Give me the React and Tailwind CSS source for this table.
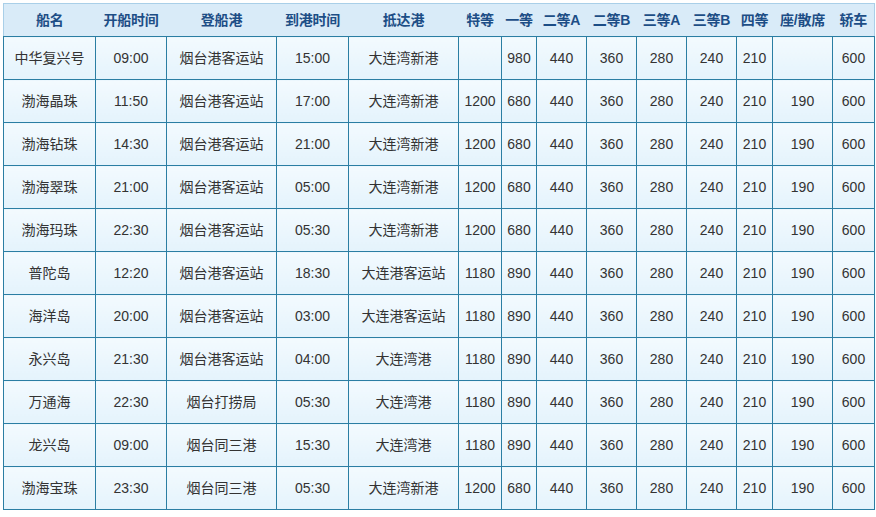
import React from "react";

const widths = [92, 71, 110, 72, 110, 43, 35, 50, 50, 50, 50, 36, 60, 42];
const headers = ["船名", "开船时间", "登船港", "到港时间", "抵达港", "特等", "一等", "二等A", "二等B", "三等A", "三等B", "四等", "座/散席", "轿车"];
const rows = [
  ["中华复兴号", "09:00", "烟台港客运站", "15:00", "大连湾新港", "", "980", "440", "360", "280", "240", "210", "", "600"],
  ["渤海晶珠", "11:50", "烟台港客运站", "17:00", "大连湾新港", "1200", "680", "440", "360", "280", "240", "210", "190", "600"],
  ["渤海钻珠", "14:30", "烟台港客运站", "21:00", "大连湾新港", "1200", "680", "440", "360", "280", "240", "210", "190", "600"],
  ["渤海翠珠", "21:00", "烟台港客运站", "05:00", "大连湾新港", "1200", "680", "440", "360", "280", "240", "210", "190", "600"],
  ["渤海玛珠", "22:30", "烟台港客运站", "05:30", "大连湾新港", "1200", "680", "440", "360", "280", "240", "210", "190", "600"],
  ["普陀岛", "12:20", "烟台港客运站", "18:30", "大连港客运站", "1180", "890", "440", "360", "280", "240", "210", "190", "600"],
  ["海洋岛", "20:00", "烟台港客运站", "03:00", "大连港客运站", "1180", "890", "440", "360", "280", "240", "210", "190", "600"],
  ["永兴岛", "21:30", "烟台港客运站", "04:00", "大连湾港", "1180", "890", "440", "360", "280", "240", "210", "190", "600"],
  ["万通海", "22:30", "烟台打捞局", "05:30", "大连湾港", "1180", "890", "440", "360", "280", "240", "210", "190", "600"],
  ["龙兴岛", "09:00", "烟台同三港", "15:30", "大连湾港", "1180", "890", "440", "360", "280", "240", "210", "190", "600"],
  ["渤海宝珠", "23:30", "烟台同三港", "05:30", "大连湾新港", "1200", "680", "440", "360", "280", "240", "210", "190", "600"],
];

export default function App() {
  return (
    <div className="bg-white w-[876px] h-[517px] overflow-hidden pt-[3px] pl-[3px]">
      <table
        className="table-fixed border-collapse w-[872px] text-[14px]"
        style={{ fontFamily: '"Liberation Sans", "Noto Sans CJK SC", Arial, sans-serif' }}
      >
        <colgroup>
          {widths.map((w, i) => (
            <col key={i} style={{ width: w }} />
          ))}
        </colgroup>
        <thead>
          <tr className="h-[33px] bg-[#d9ebf8] border border-[#a9cfe8]">
            {headers.map((h, i) => (
              <th key={i} className="font-bold text-[#1d4e86] text-center p-0 whitespace-nowrap tracking-[-0.2px]">
                {h}
              </th>
            ))}
          </tr>
        </thead>
        <tbody>
          {rows.map((r, ri) => (
            <tr key={ri} className="h-[43px]">
              {r.map((c, ci) => (
                <td
                  key={ci}
                  className="border border-[#2b7ea3] bg-gradient-to-b from-[#f3fafe] to-[#e4f3fc] text-[#333333] text-center p-0 whitespace-nowrap"
                >
                  {c}
                </td>
              ))}
            </tr>
          ))}
        </tbody>
      </table>
    </div>
  );
}
